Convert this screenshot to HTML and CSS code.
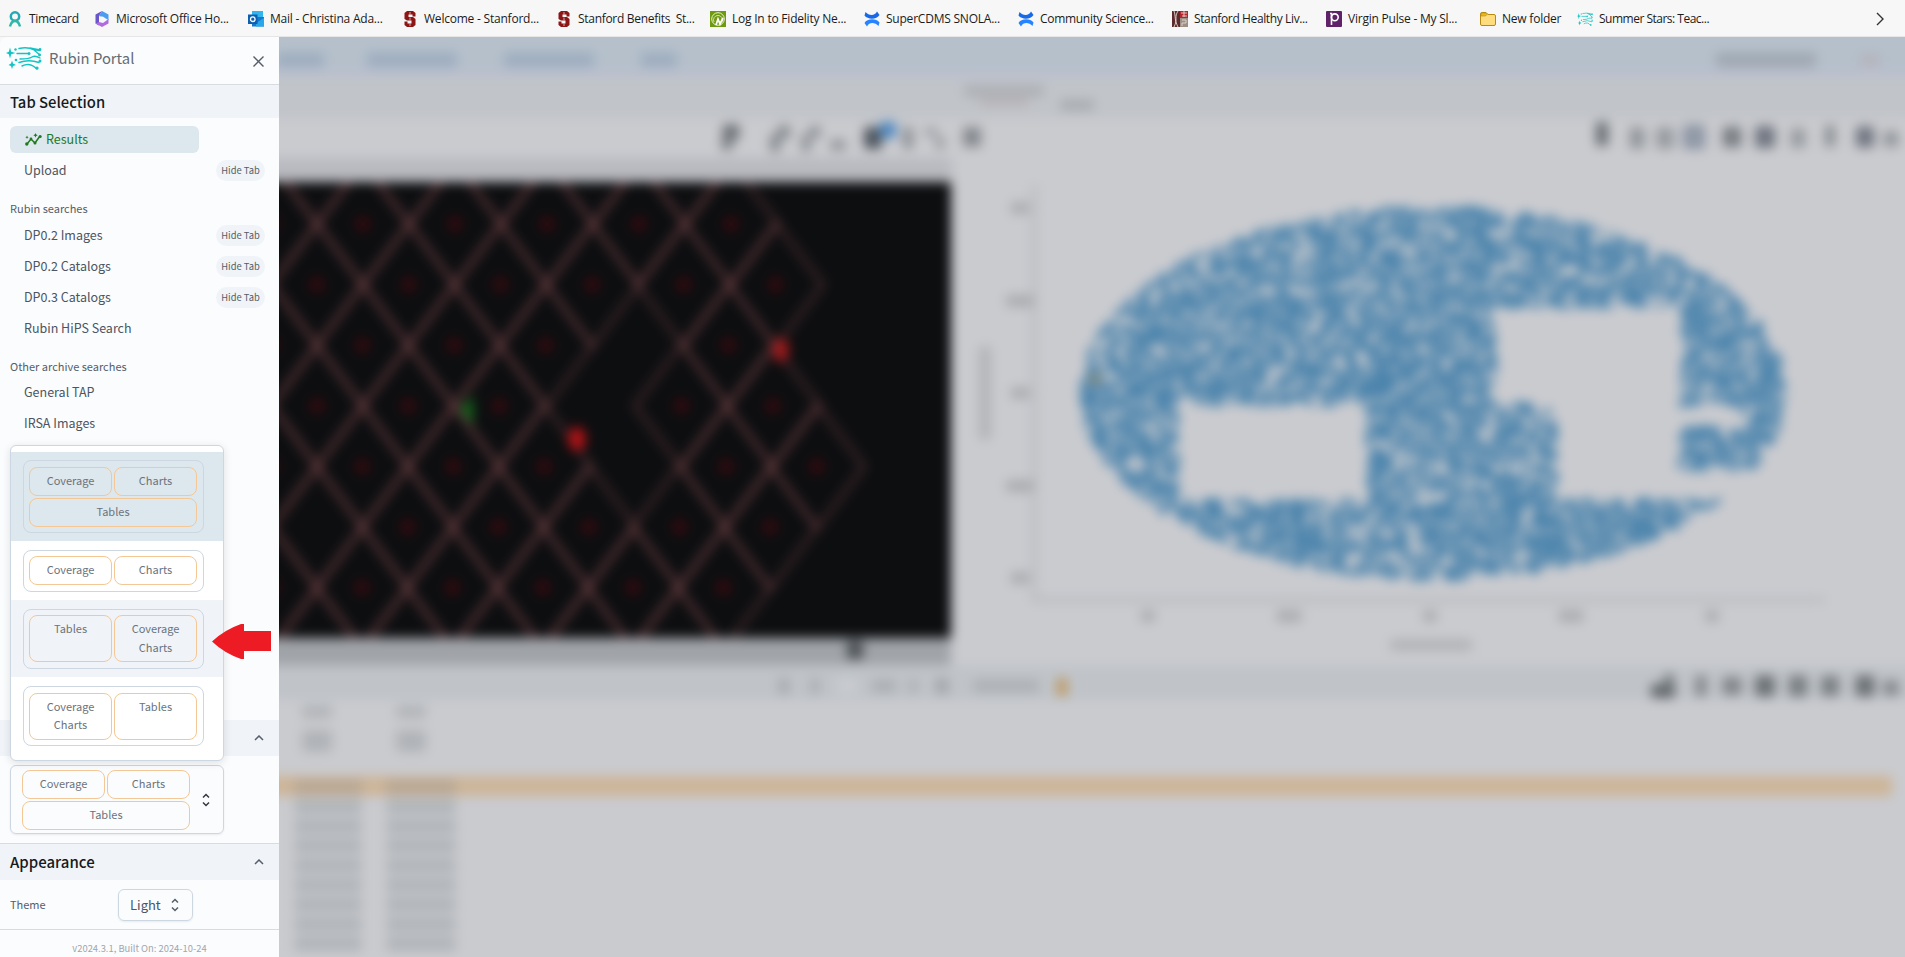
FILE: index.html
```html
<!DOCTYPE html>
<html lang="en">
<head>
<meta charset="utf-8">
<title>Rubin Portal</title>
<link rel="stylesheet" href="styles.css">
</head>
<body>
<svg width="0" height="0" class="defs">
  <symbol id="stanford" viewBox="0 0 16 16"><path d="M5 0h6l2.500 2v3.500h-3V3.500h-4V6H11l2.500 2v6L11 16H5l-2.500-2v-3.500h3v2h4V9.500H5L2.500 8V2z" fill="#8c1515"/><path d="M8 1v3M8 6.500v3M8 12v3" stroke="#d9a7a7" stroke-width="1"/></symbol>
  <symbol id="confluence" viewBox="0 0 16 16"><path d="M1.500 1C5 5 11 5 13 .5L15.500 4C13 8.500 4 9 .5 4.500z" fill="#1769e8"/><path d="M14.500 15C11 11 5 11 3 15.500L.5 12C3 7.500 12 7 15.500 11.500z" fill="#2684ff"/></symbol>
  <symbol id="rubin" viewBox="0 0 36 24">
    <g fill="none" stroke="#12c4c4" stroke-width="1.400" stroke-linecap="round">
      <path d="M13 2.500Q22 .5 28 4L34 9M24 2l10 2M11 7.500h11M14 13q9 0 12-2t8 1M13 16.500q10-3.500 20 0M16 20q8-4 15 3M27 3.500l7 1"/>
    </g>
    <g fill="#12c4c4"><path d="M4 1.500l1.200 4.300L9.500 7 5.200 8.200 4 12.500 2.800 8.200 0 7l2.800-1.200zM6 14.500l1 3L10 19l-3 1-1 3-1-3-2.500-1L5 17.500z"/><circle cx="9.500" cy="3.500" r="1.200"/><circle cx="10" cy="14" r="1.300"/><circle cx="23" cy="7.500" r="1.500"/><circle cx="34" cy="3.500" r="1.400"/><circle cx="33.500" cy="9" r="1.400"/><circle cx="34" cy="15" r="1.500"/><circle cx="31" cy="22" r="1.600"/></g>
  </symbol>
  <symbol id="up" viewBox="0 0 10 6"><path d="M1 5l4-4 4 4" fill="none" stroke="currentColor" stroke-width="1.500"/></symbol>
  <symbol id="unfold" viewBox="0 0 8 14"><path d="M1 4.500l3-3 3 3M1 9.500l3 3 3-3" fill="none" stroke="currentColor" stroke-width="1.500"/></symbol>
</svg>

<nav class="bookmarks">
  <a class="bm bm-first"><svg viewBox="0 0 16 16"><g fill="none" stroke="#25aab5" stroke-width="2.500"><circle cx="8" cy="5.500" r="4.200"/><path d="M3 15.500c1-4 3-5.500 5-5.500s4 1.500 5 5.500" stroke="#2fb8a6"/></g></svg><span class="tight">Timecard</span></a>
  <a class="bm"><svg viewBox="0 0 16 16"><path d="M8 0L1.500 3.500v9L5 14.500V5z" fill="#6a55c9"/><path d="M8 0l6.500 3.500V9L10 6.500 5 5z" fill="#4a9df0"/><path d="M14.500 8v4.500L8 16l-6.500-3.500L5 11l4 1z" fill="#b06be0"/><circle cx="8" cy="8" r="2.600" fill="#f7f7f7"/></svg><span>Microsoft Office Ho...</span></a>
  <a class="bm"><svg viewBox="0 0 16 16"><path d="M4 0h11v8H4z" fill="#32b4ef"/><path d="M4 6h12v9.500H4z" fill="#1478cc"/><path d="M8 12l8-5v8.500H8z" fill="#28a8ea"/><path d="M0 3.500h9.500v9.500H0z" fill="#0a5fb0"/><circle cx="4.800" cy="8.200" r="2.300" fill="none" stroke="#fff" stroke-width="1.300"/></svg><span>Mail - Christina Ada...</span></a>
  <a class="bm"><svg><use href="#stanford"/></svg><span>Welcome - Stanford...</span></a>
  <a class="bm"><svg><use href="#stanford"/></svg><span class="tight">Stanford Benefits&nbsp; St...</span></a>
  <a class="bm"><svg viewBox="0 0 16 16"><path d="M0 0h16v16H0z" fill="#6f9a10"/><g fill="none" stroke="#e8f2cf"><circle cx="8" cy="8" r="6.300"/><path d="M4 11a4.500 4.500 0 1 1 8 0" stroke-width=".8"/><path d="M6 14l2-6 2 5 3-6" stroke="#fff" stroke-width="1.800"/></g></svg><span>Log In to Fidelity Ne...</span></a>
  <a class="bm"><svg><use href="#confluence"/></svg><span>SuperCDMS SNOLA...</span></a>
  <a class="bm"><svg><use href="#confluence"/></svg><span class="tight">Community Science...</span></a>
  <a class="bm"><svg viewBox="0 0 16 16"><path d="M0 0h8v16H0z" fill="#5a2a2c"/><path d="M8 0h8v7H8z" fill="#b3262b"/><path d="M8 7h8v9H8z" fill="#9c8f86"/><path d="M6 0C2 6 6 8 2 16M2 0c2 6 0 8 4 16M9 2h6M10 5h5M12 0v6M10 9h4v3h-4v3" fill="none" stroke="#e4d8d4" stroke-width=".9"/></svg><span class="tighter">Stanford Healthy Liv...</span></a>
  <a class="bm"><svg viewBox="0 0 16 16"><rect width="16" height="16" rx="1" fill="#5f2167"/><path d="M4 2.500h1.500V14" fill="none" stroke="#fff" stroke-width="1.600"/><circle cx="8.800" cy="6.300" r="3.400" fill="none" stroke="#fff" stroke-width="1.600"/></svg><span>Virgin Pulse - My Sl...</span></a>
  <a class="bm bm-folder"><svg viewBox="0 0 16 16"><path d="M.5 3q0-1.500 1.500-1.500h4L8 3.500h6q1.500 0 1.500 1.500v8q0 1.500-1.500 1.500H2Q.5 14.500.5 13z" fill="#ffdc7d" stroke="#b98a13"/><path d="M1 5h4.500L7.500 3 6 2H1.500z" fill="#eab91c" stroke="#b98a13" stroke-width=".6"/></svg><span>New folder</span></a>
  <a class="bm"><svg class="stars" viewBox="0 0 36 24" preserveAspectRatio="none"><use href="#rubin"/></svg><span class="tightest">Summer Stars: Teac...</span></a>
  <svg class="more" viewBox="0 0 8 14"><path d="M1 1l6 6-6 6" fill="none" stroke="#333" stroke-width="1.400"/></svg>
</nav>

<div class="portal">
  <aside class="sidebar">
    <header class="brand">
      <svg class="logo" viewBox="0 0 36 24"><use href="#rubin"/></svg>
      <span class="brand-name">Rubin Portal</span>
      <svg class="close" viewBox="0 0 11 11"><path d="M.5.5l10 10M10.500.5l-10 10" stroke="#555e68" stroke-width="1.400"/></svg>
    </header>
    <h2 class="bar tabs-title">Tab Selection</h2>
    <ul class="tabs">
      <li class="tab active"><svg class="spark" viewBox="0 0 17 13"><path d="M2 11l4-5 4 4 5-7" fill="none" stroke="#1f7a1f" stroke-width="1.500"/><g fill="#1f7a1f"><circle cx="1.800" cy="11" r="1.700"/><circle cx="6" cy="6" r="1.400"/><circle cx="10" cy="10" r="1.500"/><circle cx="15.200" cy="3.500" r="1.500"/><path d="M10.500 0l.7 1.500 1.500.7-1.500.7-.7 1.500-.7-1.500-1.500-.7 1.500-.7zM2 2.500l.5 1.200 1.200.5-1.200.5L2 6l-.5-1.300L.3 4.200l1.200-.5z"/></g></svg>Results</li>
      <li class="tab">Upload<button>Hide Tab</button></li>
      <li class="group">Rubin searches</li>
      <li class="tab">DP0.2 Images<button>Hide Tab</button></li>
      <li class="tab">DP0.2 Catalogs<button>Hide Tab</button></li>
      <li class="tab">DP0.3 Catalogs<button>Hide Tab</button></li>
      <li class="tab">Rubin HiPS Search</li>
      <li class="group">Other archive searches</li>
      <li class="tab">General TAP</li>
      <li class="tab">IRSA Images</li>
    </ul>
    <div class="bar layout-title"><svg class="chev"><use href="#up"/></svg></div>
    <div class="layout-body">
      <div class="select">
        <div class="grid"><span>Coverage</span><span>Charts</span><span class="wide">Tables</span></div>
        <svg class="unfold"><use href="#unfold"/></svg>
      </div>
      <div class="menu">
        <div class="option selected"><div class="frame grid"><span>Coverage</span><span>Charts</span><span class="wide">Tables</span></div></div>
        <div class="option pair"><div class="frame grid"><span>Coverage</span><span>Charts</span></div></div>
        <div class="option hover"><div class="frame grid"><span class="tall">Tables</span><span class="tall">Coverage<br>Charts</span></div></div>
        <div class="option last"><div class="frame grid"><span class="tall">Coverage<br>Charts</span><span class="tall">Tables</span></div></div>
      </div>
      <svg class="pointer" viewBox="0 0 59 35"><path d="M0 17.500Q12 6 29 0h3v7h27v20H32v8h-3Q12 29 0 17.500z" fill="#ed1c24"/></svg>
    </div>
    <h2 class="bar appearance-title">Appearance<svg class="chev"><use href="#up"/></svg></h2>
    <div class="theme"><span>Theme</span><div class="theme-select">Light<svg class="unfold"><use href="#unfold"/></svg></div></div>
    <footer class="version">v2024.3.1, Built On: 2024-10-24</footer>
  </aside>
  <svg class="backdrop" id="backdrop" viewBox="279 37 1626 920" width="1626" height="920">
    <defs>
      <filter id="soft" filterUnits="userSpaceOnUse" x="240" y="0" width="1700" height="1000" color-interpolation-filters="sRGB"><feGaussianBlur stdDeviation="6"/></filter>
      <clipPath id="field"><rect x="200" y="182" width="751" height="456"/></clipPath>
    </defs>
    <g filter="url(#soft)">
      <rect x="200" y="-20" width="1800" height="1100" fill="#cacbcf"/>
      <rect x="200" y="-20" width="1800" height="88" fill="#b5c0cb"/>
      <rect x="200" y="68" width="1800" height="9" fill="#b9bfce"/>
      <rect x="200" y="77" width="1800" height="42" fill="#c1c4c9"/>
      <rect x="200" y="158" width="752" height="26" fill="#b8bac0"/>
      <rect x="200" y="182" width="751" height="456" fill="#0d0e10"/>
      <g clip-path="url(#field)" id="tiles"></g>
      <rect x="200" y="638" width="751" height="27" fill="#a0a4a9"/>
      <rect x="200" y="665" width="1800" height="36" fill="#c0c4c9"/>
      <rect x="200" y="776" width="1692" height="20" fill="#cdb598"/>
      <path d="M1034 185V600H1825" fill="none" stroke="#aeb0b5" stroke-width="3"/>
      <g id="points"></g>
      <g id="blobs"></g>
    </g>
  </svg>
</div>
<script src="backdrop.js"></script>
</body>
</html>
```

FILE: styles.css
```css
* { box-sizing: border-box; }
body { margin: 0; width: 1905px; height: 957px; overflow: hidden; background: #f7f7f7; font-family: "Noto Sans CJK SC", "Open Sans", sans-serif; color: #555e68; }
.defs { position: absolute; }
.bookmarks { display: flex; align-items: center; height: 37px; padding: 2px 0 0 7px; border-bottom: 1px solid #e6e6e6; color: #1b1b1b; font: 12px/16px "Open Sans", sans-serif; }
.bm { display: flex; gap: 6px; width: 154px; flex: none; align-items: center; white-space: nowrap; letter-spacing: -.22px; }
.tight { letter-spacing: -.3px; }
.tighter { letter-spacing: -.38px; }
.tightest { letter-spacing: -.5px; }
.bm svg { width: 16px; height: 16px; flex: none; }
.bm .stars { height: 14px; }
.bm-first { width: 87px; }
.bm-folder { width: 97px; }
.more { width: 8px; height: 14px; margin-left: 145px; }

.portal { display: flex; height: 920px; }
.backdrop { display: block; flex: none; }
.sidebar { display: flex; flex-direction: column; width: 279px; height: 920px; flex: none; background: #fbfcfe; border-top-left-radius: 8px; position: relative; z-index: 1; }
.brand { display: flex; height: 48px; flex: none; border-bottom: 1px solid #d8dce1; padding: 9px 15px 0 6px; }
.logo { width: 36px; height: 24px; }
.brand-name { margin-left: 7px; font-size: 14.800px; line-height: 24px; color: #636b74; flex: 1; }
.close { width: 11px; height: 11px; margin-top: 10px; }
.bar { display: flex; align-items: center; justify-content: space-between; flex: none; margin: 0; padding: 0 15px 0 10px; background: #f0f4f8; color: #171a1c; font-size: 15px; font-weight: 500; line-height: 24px; }
.tabs-title { height: 33px; font-size: 14.800px; }
.chev { width: 10px; height: 6px; color: #555e68; }
.tabs { list-style: none; margin: 0; padding: 8px 14px 0 10px; height: 602px; flex: none; }
.tab { display: flex; align-items: center; justify-content: space-between; height: 27px; margin-bottom: 4px; padding: 0 0 1px 14px; font-size: 12.500px; line-height: 20px; color: #4c5560; }
.active { justify-content: flex-start; width: 189px; gap: 4px; padding-left: 15px; border-radius: 6px; background: #dde7ee; color: #1f7a1f; }
.spark { width: 17px; height: 13px; }
.tab button { width: 49px; height: 21px; padding: 0; border: 0; border-radius: 11px; background: #f0f4f8; color: #555e68; font: 9.400px/20px "Noto Sans CJK SC", sans-serif; }
.group { height: 38px; margin-top: -4px; padding-top: 14px; font-size: 11px; line-height: 20px; }
.group ~ .group { height: 37px; }
.layout-title { height: 36px; justify-content: flex-end; }
.layout-body { position: relative; height: 88px; padding: 9px 10px 0; border-bottom: 1px solid #d8dce1; flex: none; }
.select { display: flex; align-items: center; width: 214px; height: 69px; padding: 0 13px 0 11px; justify-content: space-between; border: 1px solid #cdd7e1; border-radius: 6px; box-shadow: 0 1px 2px rgba(21,21,21,.08); }
.grid { display: grid; grid-template-columns: 83px 83px; gap: 2px; color: #6b737c; font-size: 11px; line-height: 19px; text-align: center; }
.grid span { height: 29px; padding-top: 3px; border: 1px solid #f3c896; border-radius: 8px; }
.grid .wide { grid-column: span 2; }
.grid .tall { height: 47px; }
.unfold { width: 8px; height: 14px; color: #32383e; }
.menu { position: absolute; left: 10px; top: -311px; width: 214px; height: 316px; padding-top: 6px; background: #fff; border: 1px solid #cdd7e1; border-radius: 6px; box-shadow: 0 2px 8px rgba(21,21,21,.12); }
.option { height: 89px; padding: 8px 12px; }
.frame { width: 181px; padding: 5px; border: 1px solid #cdd7e1; border-radius: 8px; height: 73px; padding-top: 6px; }
.selected { background: #dde7ee; }
.pair { height: 59px; }
.pair .frame { height: 42px; padding-top: 5px; margin-top: 1px; }
.hover { height: 77px; background: #f0f4f8; }
.hover .frame, .last .frame { height: 60px; padding-top: 5px; margin-top: 1px; }
.last .frame { padding-top: 6px; line-height: 18px; }
.pointer { position: absolute; left: 212px; top: -132px; width: 59px; height: 35px; }
.appearance-title { height: 36px; }
.theme { display: flex; align-items: center; height: 50px; padding-left: 10px; flex: none; border-bottom: 1px solid #d8dce1; font-size: 11px; }
.theme span { width: 108px; padding-bottom: 1px; }
.theme-select { display: flex; align-items: center; justify-content: space-between; width: 75px; height: 32px; padding: 0 13px 0 11px; border: 1px solid #cdd7e1; border-radius: 6px; font-size: 13px; color: #4c5560; box-shadow: 0 1px 2px rgba(21,21,21,.08); }
.theme-select .unfold { color: #555e68; }
.version { height: 26px; padding-top: 9px; text-align: center; font-size: 9.400px; line-height: 18px; color: #9fa6ad; }
```

FILE: backdrop.js
```js
const NS = "http://www.w3.org/2000/svg";
function add(parent, tag, attrs) {
  const el = document.createElementNS(NS, tag);
  for (const k in attrs) el.setAttribute(k, attrs[k]);
  document.getElementById(parent).appendChild(el);
}

// Sky tiles: column numbers present in each half-row
const rows = {
  "-1": [0, 2, 4, 6, 8], 0: [-1, 1, 3, 5, 7, 9], 1: [0, 2, 4, 6, 8, 10],
  2: [-1, 1, 3, 5, 9], 3: [0, 2, 4, 8, 10], 4: [-1, 1, 3, 5, 9, 11],
  5: [0, 2, 4, 6, 8, 10], 6: [-1, 1, 3, 5, 7, 9], 7: [0, 2, 4, 6, 8]
};
for (const j in rows) for (const i of rows[j]) {
  const x = 317 + 46 * i * (1 - 0.003 * j), y = 224 + 60.600 * j;
  add("tiles", "path", { d: `M${x - 47} ${y}L${x} ${y - 62}L${x + 47} ${y}L${x} ${y + 62}Z`, fill: "none", stroke: "#6b4044", "stroke-width": 5, "stroke-opacity": .52 });
  if (!(j == 5 && i === 0)) add("tiles", "circle", { cx: x, cy: y, r: 8, fill: "#320b10" });
}
add("tiles", "ellipse", { cx: 781, cy: 350, rx: 8, ry: 12, fill: "#a01a1c" });
add("tiles", "ellipse", { cx: 577, cy: 439, rx: 9, ry: 12, fill: "#b01316" });
add("tiles", "path", { d: "M460 409l13-13v30z", fill: "#146a1a" });

// Scatter points inside the ellipse, minus the empty regions
let seed = 20241;
const rnd = () => (seed = (seed * 16807) % 2147483647) / 2147483647;
const holes = [[1495, 307, 1682, 404], [1556, 400, 1678, 500], [1178, 405, 1367, 500], [1672, 405, 1743, 427], [1675, 470, 1800, 500]];
let d = "";
for (let n = 0; n < 10500; n++) {
  const x = 1079 + rnd() * 708, y = 205 + rnd() * 377;
  if (((x - 1433) / 352) ** 2 + ((y - 393) / 186) ** 2 > 1) continue;
  if (holes.some(h => x > h[0] && x < h[2] && y > h[1] && y < h[3])) continue;
  d += `M${x.toFixed(1)} ${y.toFixed(1)}h0`;
}
add("points", "path", { d, fill: "none", stroke: "#4a83ac", "stroke-width": 6.200, "stroke-linecap": "round" });
add("points", "circle", { cx: 1095, cy: 379, r: 6, fill: "#7a8478" });

const blob = (x, y, w, h, fill) => add("blobs", "rect", { x: x - w / 2, y: y - h / 2, width: w, height: h, rx: 3, fill });
// Header links and account
[[300, 48], [412, 90], [549, 90], [659, 36]].forEach(([x, w]) => blob(x, 60, w, 14, "#9cacbe"));
blob(1766, 60, 100, 14, "#9ea7b1"); blob(1870, 60, 20, 10, "#b6b1b8");
blob(1004, 91, 80, 12, "#adb0b5"); blob(1004, 102, 50, 8, "#b8b4b7"); blob(1077, 105, 34, 10, "#a6a9ae");
// Image toolbar
[[731, 132, 17, 15, "#6d7176"], [727, 144, 12, 12, "#7d8186"], [775, 143, 10, 18, "#83878c"], [784, 132, 12, 13, "#83878c"], [806, 143, 9, 18, "#8b8f94"], [815, 132, 11, 12, "#8b8f94"], [838, 145, 15, 10, "#8b8f94"], [873, 138, 18, 22, "#4f565e"], [888, 130, 16, 16, "#4a86c2"], [908, 138, 10, 22, "#8b8f94"], [931, 132, 13, 7, "#92969b"], [940, 143, 8, 13, "#92969b"], [972, 137, 18, 20, "#85898e"]].forEach(b => blob(...b));
// Chart toolbar
[[1602, 134, 12, 24, "#686d72"], [1637, 138, 15, 22, "#92969b"], [1665, 138, 18, 22, "#989ca1"], [1694, 137, 23, 25, "#8f98a6"], [1732, 137, 19, 21, "#7a7f84"], [1765, 137, 20, 22, "#707580"], [1798, 138, 15, 20, "#989ca1"], [1830, 136, 10, 22, "#888c91"], [1865, 137, 18, 21, "#707580"], [1891, 139, 15, 16, "#92969b"]].forEach(b => blob(...b));
// Table toolbar
[[1663, 691, 24, 14, "#63686d"], [1669, 680, 9, 12, "#6d7277"], [1701, 686, 11, 21, "#82868b"], [1732, 686, 19, 18, "#82868b"], [1765, 686, 20, 21, "#6c7176"], [1798, 686, 19, 21, "#7a7f84"], [1830, 686, 18, 20, "#7a7f84"], [1865, 686, 19, 21, "#6c7176"], [1891, 688, 15, 15, "#82868b"], [784, 686, 10, 16, "#a5a9ae"], [815, 686, 10, 16, "#abafb4"], [847, 686, 20, 16, "#c9cbcf"], [884, 686, 24, 12, "#aaaeb3"], [913, 686, 8, 14, "#aaaeb3"], [942, 686, 12, 16, "#a0a4a9"], [1006, 686, 66, 12, "#acb0b5"], [1062, 687, 11, 18, "#be9a66"], [855, 650, 16, 18, "#4b5055"]].forEach(b => blob(...b));
// Axis labels
[208, 301, 393, 486, 578].forEach((y, i) => blob(1020, y, i % 2 ? 28 : 18, 12, "#aaacb0"));
[1148, 1289, 1430, 1571, 1712].forEach((x, i) => blob(x, 616, i % 2 ? 25 : 14, 12, "#aaacb0"));
blob(1431, 645, 82, 11, "#b0b2b6"); blob(985, 393, 11, 94, "#b0b2b6");
// Table columns
[[317, 712], [411, 712], [317, 741], [411, 741]].forEach(([x, y], i) => blob(x, y, 30, i > 1 ? 22 : 12, "#b0b3b7"));
for (let r = 0; r < 9; r++) { blob(328, 787 + r * 19.600, 68, 15, r ? "#b1b5b9" : "#b9a792"); blob(421, 787 + r * 19.600, 70, 15, r ? "#b1b5b9" : "#b9a792"); }
```
